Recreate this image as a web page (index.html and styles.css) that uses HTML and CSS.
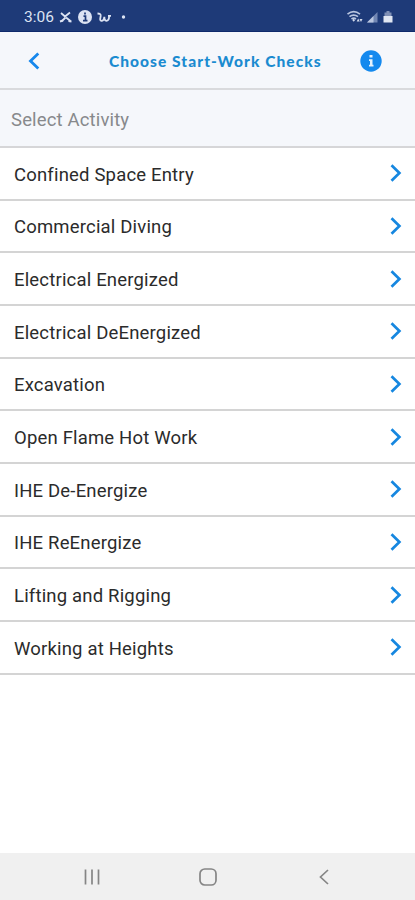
FILE: index.html
```html
<!DOCTYPE html>
<html lang="en">
<head>
<meta charset="utf-8">
<title>Choose Start-Work Checks</title>
<link rel="stylesheet" href="styles.css">
</head>
<body>
<div class="screen">
  <div class="status">
    <span class="time">3:06</span>
    <svg class="status-left" width="68" height="16" viewBox="0 0 68 16" fill="none" stroke="#dce3f3">
      <path d="M2 4l4 3.500 5-4M3 12l3.500-3.500M7 8.500l4.500 3.500" stroke-width="1.800"/>
      <path d="M1 12.500l3-1M9.500 12l3 .5" stroke-width="2"/>
      <circle cx="26" cy="8" r="7" fill="#dce3f3" stroke="none"/>
      <path d="M26 3.500v2M24.500 7.200H26.500v4.300M24 11.700h4.500" stroke="#1e3a78" stroke-width="1.700"/>
      <path d="M38.500 4.500c2 0 3.500.5 3.200 2.500-.4 2-1.200 4.500.6 4.800 2 .2 2.800-2 3-4 0 2.500.2 4 2 4s2.800-2 2.800-4.500M49 6.800h3" stroke-width="1.800"/>
      <circle cx="64.500" cy="8" r="1.700" fill="#dce3f3" stroke="none"/>
    </svg>
    <svg class="status-right" width="48" height="16" viewBox="0 0 48 16" fill="none">
      <path d="M1.500 5.200q6.200-5 12.500 0M3.500 7.700q4.200-3.300 8.500 0M5.500 10q2.200-1.600 4.500 0" stroke="#b9c5df" stroke-width="1.700"/>
      <path d="M7.700 9.500l1.300 1.700-1.300 1.600-1.300-1.600z" fill="#d2daeb"/>
      <path d="M10.700 12.500l1.500-3 1.500 3zM13.500 10l1.500 3 1.500-3z" fill="#d2daeb"/>
      <path d="M21 13.500L31.500 3v10.500z" fill="#7186b3"/>
      <path d="M21 13.500l6.500-6.500v6.500z" fill="#b9c5df"/>
      <path d="M38.500 3.500h2V2h3v1.500h2V8h-7z" fill="#7f8fb5"/>
      <path d="M37.500 7h9v6.500h-9z" fill="#e0e6f2"/>
    </svg>
  </div>
  <header class="header">
    <svg class="back" width="12" height="18" viewBox="0 0 12 18"><path d="M10.300 1.500L2.500 9l7.800 7.500" fill="none" stroke="#1687ec" stroke-width="2.800"/></svg>
    <h1 class="title">Choose Start-Work Checks</h1>
    <svg class="info" width="22" height="22" viewBox="0 0 22 22"><circle cx="11" cy="11" r="10.700" fill="#1489ee"/><path d="M9.500 5h3v2.500h-3zM9 9.200h3.500v5.600h1v1.700H9v-1.700h1v-3.900H9z" fill="#e4f2fd"/></svg>
  </header>
  <div class="section">Select Activity</div>
  <ul class="list">
    <li class="row"><span>Confined Space Entry</span><svg class="chev" viewBox="0 0 12 18"><path d="M1.500 1.300L9.400 9l-7.900 7.700"/></svg></li>
    <li class="row"><span>Commercial Diving</span><svg class="chev" viewBox="0 0 12 18"><path d="M1.500 1.300L9.400 9l-7.900 7.700"/></svg></li>
    <li class="row"><span>Electrical Energized</span><svg class="chev" viewBox="0 0 12 18"><path d="M1.500 1.300L9.400 9l-7.900 7.700"/></svg></li>
    <li class="row"><span>Electrical DeEnergized</span><svg class="chev" viewBox="0 0 12 18"><path d="M1.500 1.300L9.400 9l-7.900 7.700"/></svg></li>
    <li class="row"><span>Excavation</span><svg class="chev" viewBox="0 0 12 18"><path d="M1.500 1.300L9.400 9l-7.900 7.700"/></svg></li>
    <li class="row"><span>Open Flame Hot Work</span><svg class="chev" viewBox="0 0 12 18"><path d="M1.500 1.300L9.400 9l-7.900 7.700"/></svg></li>
    <li class="row"><span>IHE De-Energize</span><svg class="chev" viewBox="0 0 12 18"><path d="M1.500 1.300L9.400 9l-7.900 7.700"/></svg></li>
    <li class="row"><span>IHE ReEnergize</span><svg class="chev" viewBox="0 0 12 18"><path d="M1.500 1.300L9.400 9l-7.900 7.700"/></svg></li>
    <li class="row"><span>Lifting and Rigging</span><svg class="chev" viewBox="0 0 12 18"><path d="M1.500 1.300L9.400 9l-7.900 7.700"/></svg></li>
    <li class="row"><span>Working at Heights</span><svg class="chev" viewBox="0 0 12 18"><path d="M1.500 1.300L9.400 9l-7.900 7.700"/></svg></li>
  </ul>
  <nav class="nav">
    <svg width="18" height="18" viewBox="0 0 18 18"><path d="M2.500 1.500v15M9 1.500v15M15.500 1.500v15"/></svg>
    <svg width="18" height="18" viewBox="0 0 18 18"><rect x="1" y="1" width="16" height="16" rx="4.800"/></svg>
    <svg width="18" height="18" viewBox="0 0 18 18"><path d="M13 2L5.500 9l7.500 7"/></svg>
  </nav>
</div>
</body>
</html>
```
FILE: styles.css
```css
* { box-sizing: border-box; }
body { margin: 0; font-family: Roboto, "Liberation Sans", sans-serif; }
.screen { width: 415px; height: 900px; display: flex; flex-direction: column; background: #fff; }
svg { display: block; flex: none; }
.status { height: 32px; background: #1e3a78; border-bottom: 1px solid #0f2a6b; display: flex; align-items: center; padding: 2px 21px 0 24px; color: #dce3f3; }
.time { width: 35px; font-size: 15.5px; line-height: 18px; white-space: nowrap; }
.status-right { margin-left: auto; }
.header { height: 58px; background: #f5f7fb; border-bottom: 2px solid #d9dadd; display: flex; align-items: center; padding: 1px 33px 0 28px; }
.title { margin: 0 auto 0 69px; font: 900 15.5px/20px Lato, sans-serif; letter-spacing: 1.05px; color: #1b8bd0; white-space: nowrap; padding-top: 1px; }
.section { height: 58px; background: #f5f7fb; border-bottom: 2px solid #d6d6d8; padding: 1px 11px 0; line-height: 59px; font-size: 18.5px; letter-spacing: 0.15px; color: #87898c; }
.list { list-style: none; margin: 0; padding: 0; }
.row { height: 52.68px; border-bottom: 2px solid #d4d4d4; display: flex; align-items: center; justify-content: space-between; padding: 0 13.5px 0 14px; font-size: 18.5px; letter-spacing: 0.18px; color: #2b2b2b; }
.row span { padding-top: 2.8px; }
.chev { width: 12px; height: 18px; fill: none; stroke: #1687e0; stroke-width: 2.7; }
.nav { margin-top: auto; height: 47px; background: #f0f0f0; display: flex; justify-content: space-between; align-items: center; padding: 1px 82px 0 83px; }
.nav svg { fill: none; stroke: #858585; stroke-width: 1.7; }
```
